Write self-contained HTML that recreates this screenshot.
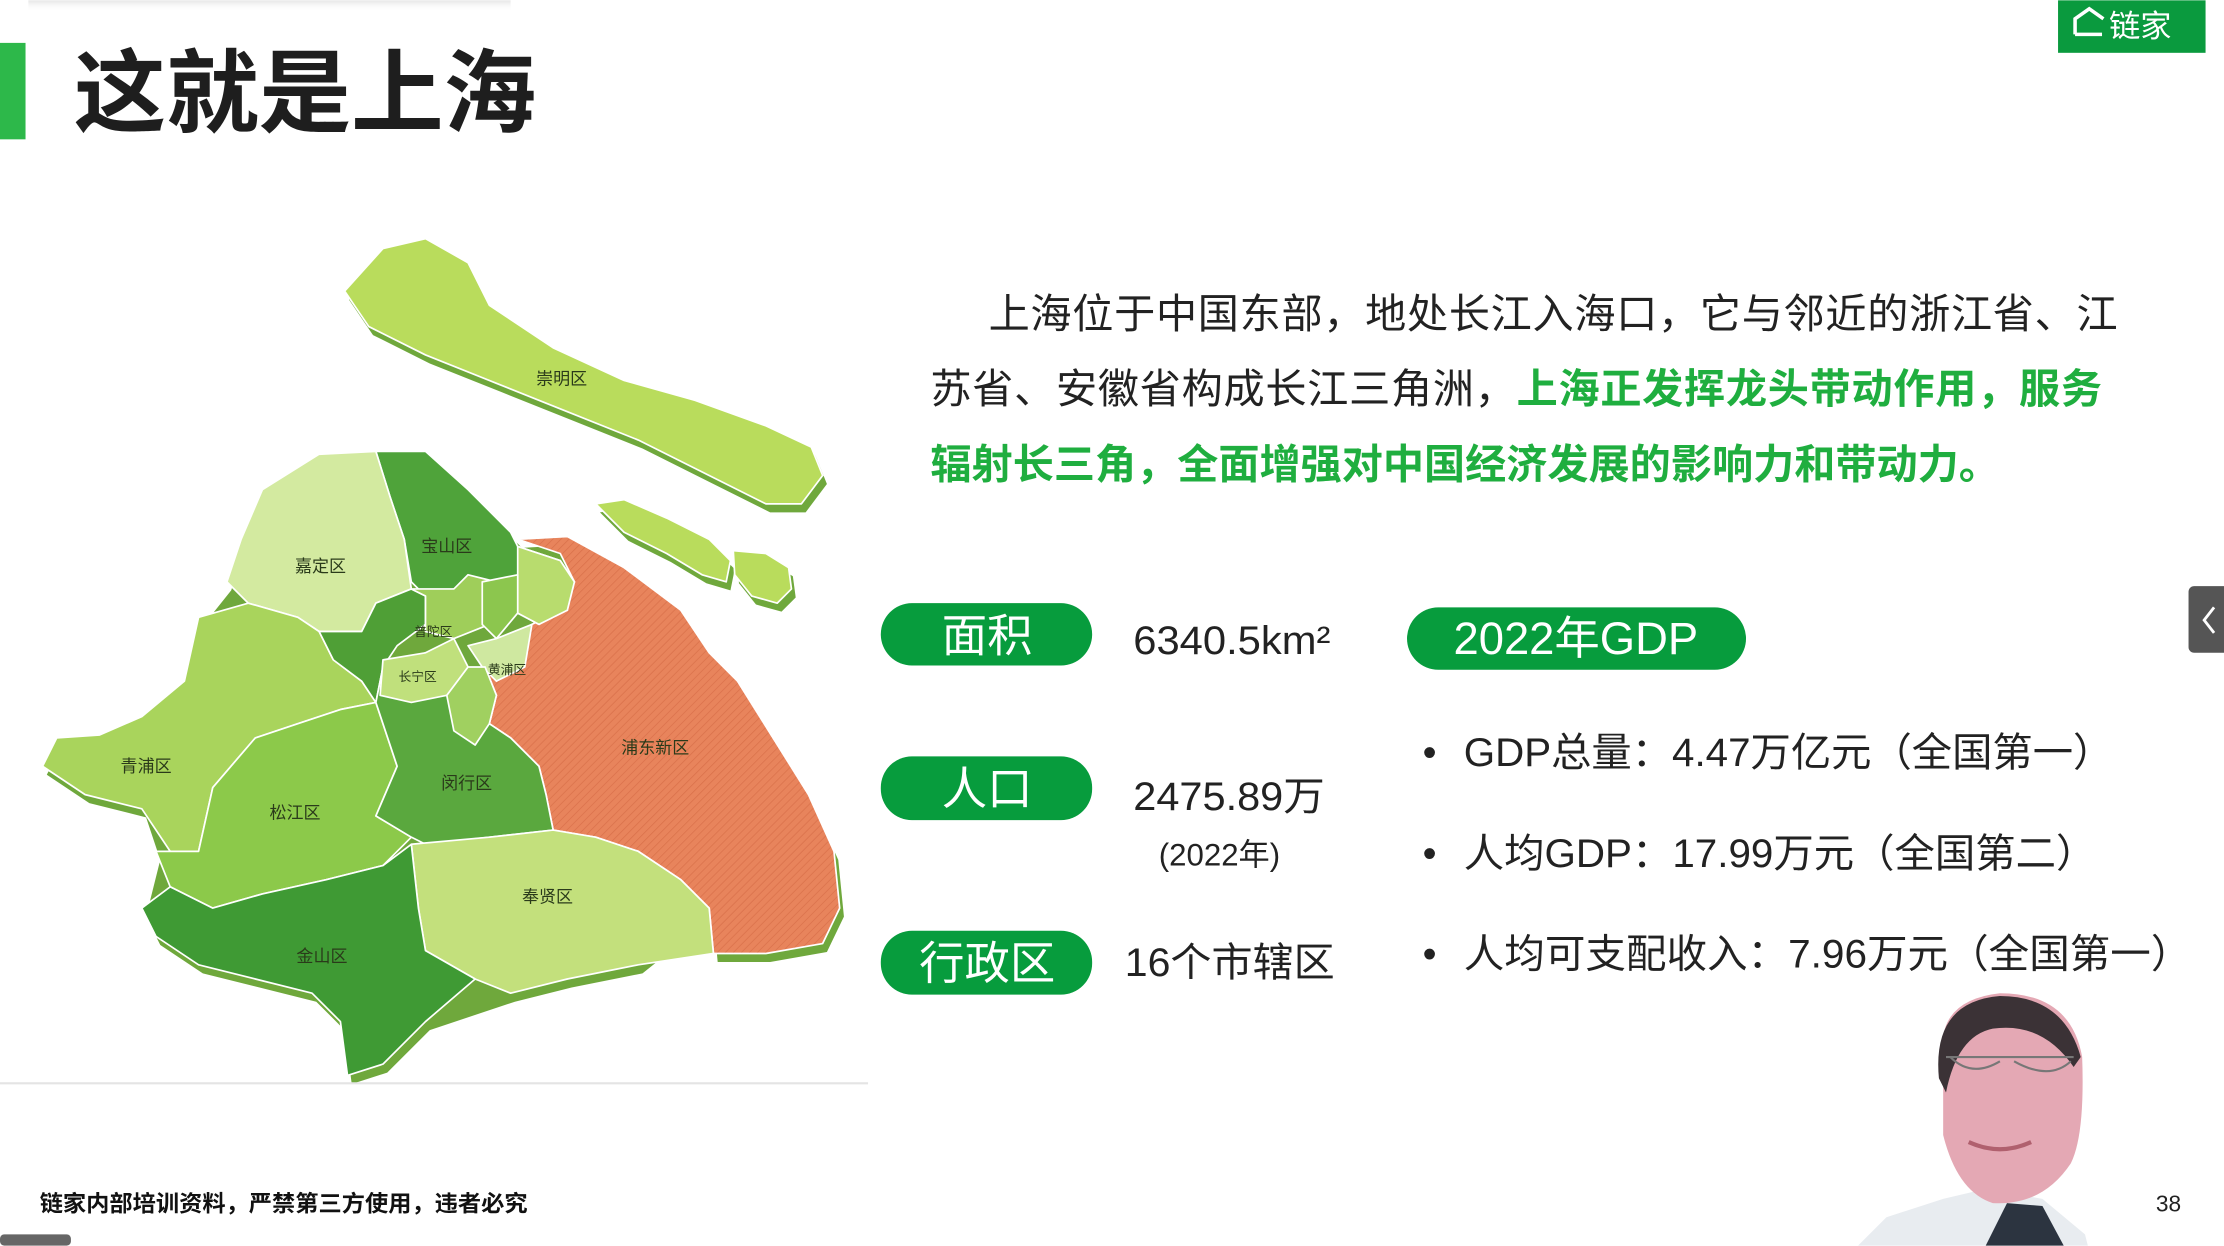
<!DOCTYPE html>
<html><head><meta charset="utf-8"><style>
html,body{margin:0;padding:0;background:#fff;width:2224px;height:1246px;overflow:hidden}
svg{display:block}
text{font-family:"Liberation Sans","Noto Sans CJK SC",sans-serif}
</style></head><body>
<svg width="2224" height="1246" viewBox="0 0 1568 878" xmlns="http://www.w3.org/2000/svg">
<defs>
<linearGradient id="sh" x1="0" y1="0" x2="0" y2="1"><stop offset="0" stop-color="#e6e6e6"/><stop offset="1" stop-color="#fff" stop-opacity="0"/></linearGradient>
<pattern id="hatch" width="4" height="4" patternUnits="userSpaceOnUse" patternTransform="rotate(45)"><rect width="4" height="4" fill="#e8845c"/><line x1="0" y1="0" x2="0" y2="4" stroke="#d9704a" stroke-width="1"/></pattern>
</defs>
<rect x="20" y="0" width="340" height="8" fill="url(#sh)"/>
<rect x="0" y="30" width="18" height="68" fill="#2db84a"/>
<text x="52" y="88" font-size="64" font-weight="bold" fill="#1e1e1e" textLength="326" lengthAdjust="spacingAndGlyphs">这就是上海</text>
<rect x="1451" y="0" width="104" height="37" fill="#0a9a3e"/>
<path d="M1463 24 V13 L1473 6 L1483 13 M1463 24 H1482" fill="none" stroke="#fff" stroke-width="2.5"/>
<text x="1487" y="26" font-size="22" fill="#fff">链家</text>

<!-- map -->
<g stroke="#fff" stroke-width="1.2" stroke-linejoin="round">
<g transform="translate(3,6)" fill="#6fa83c" stroke="none">
<path d="M243 205 270 175 300 168 330 185 345 215 390 245 440 268 490 282 540 300 572 315 580 335 565 355 540 355 500 335 450 310 400 290 350 270 300 250 260 230Z"/>
<path d="M420 355 440 352 470 365 500 380 515 395 512 410 495 405 470 390 440 375Z"/>
<path d="M517 388 540 390 556 400 558 415 548 425 530 420 518 405Z"/>
<path d="M365 380 400 378 440 400 480 430 500 460 520 480 545 520 570 560 588 600 592 640 580 665 540 672 503 672 500 640 450 680 400 690 360 700 300 720 270 750 245 758 240 720 220 700 180 690 140 680 110 660 100 640 110 600 100 570 60 560 30 540 40 520 70 518 100 505 130 480 140 435 160 410 170 380 185 345 225 320 265 318 300 318 330 345 360 375Z"/>
</g>
<path fill="#b9dc5c" d="M243 205 270 175 300 168 330 185 345 215 390 245 440 268 490 282 540 300 572 315 580 335 565 355 540 355 500 335 450 310 400 290 350 270 300 250 260 230Z"/>
<path fill="#b9dc5c" d="M420 355 440 352 470 365 500 380 515 395 512 410 495 405 470 390 440 375Z"/>
<path fill="#b9dc5c" d="M517 388 540 390 556 400 558 415 548 425 530 420 518 405Z"/>
<path fill="url(#hatch)" d="M365 380 400 378 440 400 480 430 500 460 520 480 545 520 570 560 588 600 592 640 580 665 540 672 503 672 500 640 480 620 450 600 420 590 390 585 385 560 380 540 360 520 345 510 350 490 342 470 360 455 375 440 395 430 405 410 395 390Z"/>
<path fill="#4fa33a" d="M265 318 300 318 330 345 360 375 365 385 395 395 405 410 395 430 380 440 365 432 340 418 320 415 300 420 290 410 285 380 275 350Z"/>
<path fill="#d3eaa0" d="M185 345 225 320 265 318 275 350 285 380 290 415 265 425 255 445 225 445 210 435 175 425 160 410 170 380Z"/>
<path fill="#a9d45c" d="M140 435 175 425 210 435 225 445 235 465 255 480 265 495 240 500 210 510 180 520 150 555 140 600 120 600 100 570 60 560 30 540 40 520 70 518 100 505 130 480Z"/>
<path fill="#8cc94a" d="M150 555 180 520 210 510 240 500 265 495 280 540 265 575 290 590 270 610 230 620 185 630 150 640 120 625 110 600 140 600Z"/>
<path fill="#4f9f36" d="M225 445 255 445 265 425 290 415 300 420 300 440 280 455 270 470 265 495 255 480 235 465Z"/>
<path fill="#5aa83e" d="M265 495 270 470 300 460 320 470 340 490 345 510 360 520 380 540 385 560 390 585 345 590 300 595 290 590 265 575 280 540Z"/>
<path fill="#9fce5a" d="M290 415 320 415 330 405 350 410 345 440 320 450 300 445 300 420Z"/>
<path fill="#b8dc6e" d="M365 385 395 395 405 410 400 430 380 440 365 432Z"/>
<path fill="#8cc64e" d="M340 410 365 405 365 432 350 450 340 440Z"/>
<path fill="#c0e07c" d="M270 465 300 460 320 450 330 470 315 490 290 495 268 490Z"/>
<path fill="#cfe8a0" d="M330 455 350 450 375 440 370 470 350 480 340 470Z"/>
<path fill="#a0d060" d="M315 490 330 470 342 470 350 490 345 510 335 525 320 515Z"/>
<path fill="#c3e07c" d="M290 595 345 590 390 585 420 590 450 600 480 620 500 640 503 672 450 680 400 690 360 700 335 690 300 670 295 640Z"/>
<path fill="#3f9a34" d="M120 625 150 640 185 630 230 620 270 610 290 595 295 640 300 670 335 690 300 720 270 750 245 758 240 720 220 700 180 690 140 680 110 660 100 640Z"/>
</g>
<g font-size="12" fill="#2a3a1a">
<text x="378" y="271">崇明区</text><text x="297" y="389">宝山区</text><text x="208" y="403">嘉定区</text>
<text x="85" y="544">青浦区</text><text x="190" y="577">松江区</text><text x="311" y="556">闵行区</text>
<text x="438" y="531">浦东新区</text><text x="368" y="636">奉贤区</text><text x="209" y="678">金山区</text>
<text x="292" y="448" font-size="9">普陀区</text><text x="281" y="480" font-size="9">长宁区</text><text x="344" y="475" font-size="9">黄浦区</text>
</g>
<line x1="0" y1="763.5" x2="612" y2="763.5" stroke="#e4e4e4" stroke-width="1.5"/>

<!-- paragraph -->
<g font-size="29" fill="#222">
<text x="697" y="231" textLength="796" lengthAdjust="spacing">上海位于中国东部，地处长江入海口，它与邻近的浙江省、江</text>
<text x="656" y="284" textLength="826" lengthAdjust="spacing">苏省、安徽省构成长江三角洲，<tspan fill="#1fae3f" font-weight="bold">上海正发挥龙头带动作用，服务</tspan></text>
<text x="656" y="337" fill="#1fae3f" font-weight="bold" textLength="754" lengthAdjust="spacing">辐射长三角，全面增强对中国经济发展的影响力和带动力。</text>
</g>

<!-- pills -->
<g fill="#079c3d">
<rect x="621" y="425" width="149" height="44" rx="22"/>
<rect x="621" y="533" width="149" height="45" rx="22"/>
<rect x="621" y="656" width="149" height="45" rx="22"/>
<rect x="992" y="428" width="239" height="44" rx="22"/>
</g>
<g fill="#fff" font-size="32" text-anchor="middle">
<text x="696" y="459">面积</text><text x="696" y="567">人口</text><text x="696" y="690">行政区</text>
<text x="1111" y="461">2022年GDP</text>
</g>
<g fill="#222" font-size="28">
<text x="799" y="461" textLength="139" lengthAdjust="spacingAndGlyphs">6340.5km²</text>
<text x="799" y="571" textLength="135" lengthAdjust="spacingAndGlyphs">2475.89万</text>
<text x="817" y="610" font-size="22">(2022年)</text>
<text x="793" y="688" textLength="148" lengthAdjust="spacingAndGlyphs">16个市辖区</text>
<text x="1003" y="540">•</text><text x="1032" y="540" textLength="458" lengthAdjust="spacingAndGlyphs">GDP总量：4.47万亿元（全国第一）</text>
<text x="1003" y="611">•</text><text x="1032" y="611" textLength="446" lengthAdjust="spacingAndGlyphs">人均GDP：17.99万元（全国第二）</text>
<text x="1003" y="682">•</text><text x="1032" y="682" textLength="513" lengthAdjust="spacingAndGlyphs">人均可支配收入：7.96万元（全国第一）</text>
</g>

<!-- side tab -->
<rect x="1543" y="413" width="30" height="47" rx="4" fill="#555"/>
<path d="M1561 428 L1554 437 L1561 446" fill="none" stroke="#fff" stroke-width="2"/>

<!-- webcam person -->
<path d="M1310 878 L1330 858 L1370 845 L1400 838 L1440 845 L1470 870 L1472 878Z" fill="#e8ecf0"/>
<path d="M1415 848 L1440 850 L1455 878 L1400 878Z" fill="#2c3440"/>
<path d="M1370 745 Q1365 705 1410 700 Q1460 700 1468 745 Q1470 800 1460 820 Q1440 850 1405 848 Q1380 840 1370 800Z" fill="#e4a8b4"/>
<path d="M1367 760 Q1362 706 1410 702 Q1455 702 1467 745 L1462 752 Q1440 720 1405 725 Q1380 730 1372 770Z" fill="#3b3236"/>
<path d="M1372 745 L1462 745 M1375 745 Q1390 760 1410 748 M1420 748 Q1445 762 1460 748" fill="none" stroke="#777" stroke-width="1.5"/>
<path d="M1388 805 Q1410 815 1432 805" fill="none" stroke="#b0606e" stroke-width="3"/>

<text x="28" y="854" font-size="16" font-weight="bold" fill="#111" textLength="344" lengthAdjust="spacingAndGlyphs">链家内部培训资料，严禁第三方使用，违者必究</text>
<text x="1520" y="854" font-size="16" fill="#222">38</text>
<rect x="0" y="870" width="50" height="8" rx="3" fill="#666"/>
</svg>
</body></html>
